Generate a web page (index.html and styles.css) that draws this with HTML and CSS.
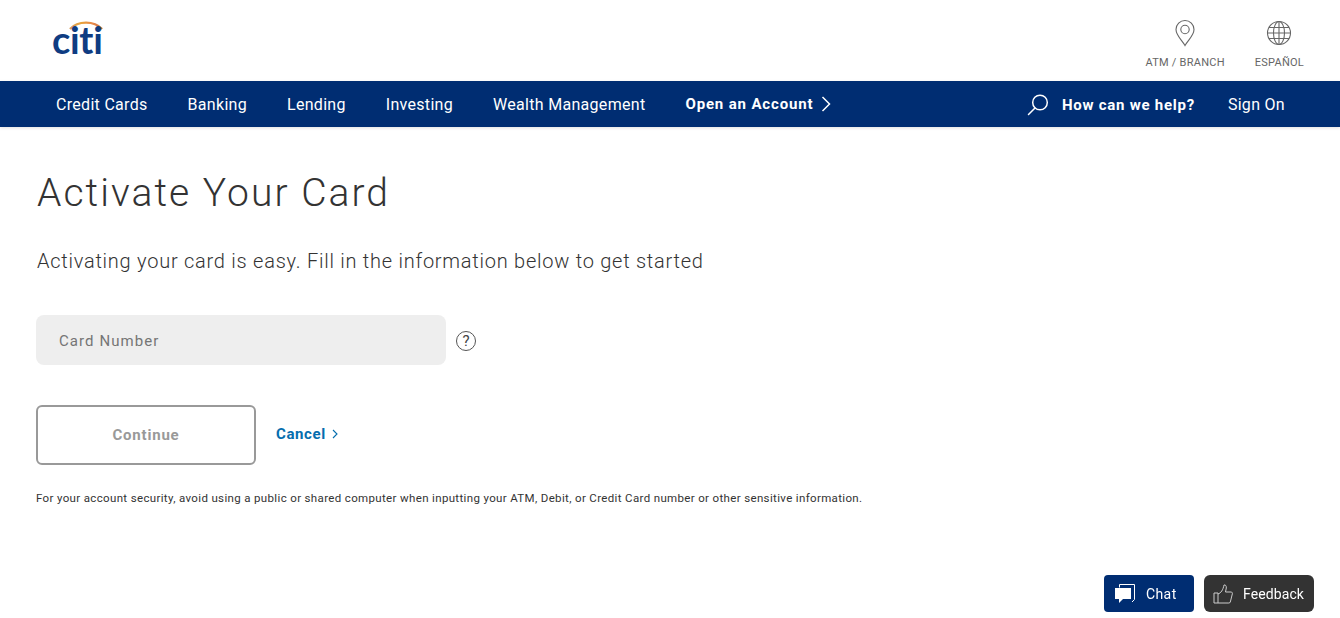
FILE: index.html
```html
<!DOCTYPE html>
<html lang="en">
<head>
<meta charset="utf-8">
<title>Activate Your Card</title>
<link rel="stylesheet" href="styles.css">
</head>
<body>
<header class="top">
  <a class="logo" href="#">
    <svg class="logo-arc" width="34" height="10" viewBox="0 0 34 10"><defs><linearGradient id="rb" x1="0" x2="1" y1="0" y2="0"><stop offset="0" stop-color="#d8a05a"/><stop offset=".35" stop-color="#e9a23b"/><stop offset=".7" stop-color="#e8894a"/><stop offset="1" stop-color="#c9703f"/></linearGradient></defs><path d="M1 9C9 .5 25 .5 33 9" fill="none" stroke="url(#rb)" stroke-width="2.400"/></svg>
    <span class="logo-text">citi</span>
  </a>
  <div class="utils">
    <a class="util" href="#">
      <svg width="24" height="28" viewBox="0 0 24 28" fill="none" stroke="#666" stroke-width="1.100"><path d="M12 26.500C9 21 3 16.500 3 10.500a9 9 0 0 1 18 0C21 16.500 15 21 12 26.500Z"/><circle cx="12" cy="10.500" r="4.200"/></svg>
      <span>ATM / BRANCH</span>
    </a>
    <a class="util" href="#">
      <svg width="28" height="28" viewBox="0 0 28 28" fill="none" stroke="#666" stroke-width="1.100"><circle cx="14" cy="14" r="11.500"/><ellipse cx="14" cy="14" rx="5.500" ry="11.500"/><path d="M14 2.500v23M2.500 14h23M4 8.500h20M4 19.500h20"/></svg>
      <span>ESPAÑOL</span>
    </a>
  </div>
</header>
<nav class="nav">
  <a href="#">Credit Cards</a>
  <a href="#">Banking</a>
  <a href="#">Lending</a>
  <a href="#">Investing</a>
  <a href="#">Wealth Management</a>
  <a class="strong open" href="#">Open an Account
    <svg width="10" height="16" viewBox="0 0 10 16" fill="none" stroke="#fff" stroke-width="1.500"><path d="M1.500 1l7 7-7 7"/></svg>
  </a>
  <div class="nav-right">
    <a class="strong help" href="#">
      <svg width="22" height="22" viewBox="0 0 22 22" fill="none" stroke="#fff" stroke-width="1.500"><circle cx="13" cy="8.500" r="7.300"/><path d="M8 14l-6.500 6.500" stroke-linecap="round"/></svg>
      How can we help?
    </a>
    <a href="#">Sign On</a>
  </div>
</nav>
<main class="main">
  <h1>Activate Your Card</h1>
  <p class="lead">Activating your card is easy. Fill in the information below to get started</p>
  <div class="field-row">
    <input class="field" type="text" placeholder="Card Number">
    <span class="hint">?</span>
  </div>
  <div class="actions">
    <button class="continue" type="button">Continue</button>
    <a class="cancel" href="#">Cancel <svg class="cancel-icon" width="6" height="10" viewBox="0 0 6 10" fill="none" stroke="#056dae" stroke-width="1.100"><path d="M1 1l4 4-4 4"/></svg></a>
  </div>
  <p class="note">For your account security, avoid using a public or shared computer when inputting your ATM, Debit, or Credit Card number or other sensitive information.</p>
</main>
<div class="float">
  <a class="chat" href="#">
    <svg width="22" height="22" viewBox="0 0 22 22"><path d="M5.500 4.500V1.500H20.500V16.500L18 19" fill="none" stroke="#fff" stroke-width="1"/><path d="M1 5H17V16H9L5 20V16H1Z" fill="#fff"/></svg>
    Chat
  </a>
  <a class="feedback" href="#">
    <svg width="20" height="22" viewBox="0 0 20 22" fill="none" stroke="#ccc" stroke-width="1"><path d="M1 10h4v10H1zM5 11c3-1 5-4 6-9 1.500-.5 2.500 1 2.300 3L12.500 9H18c1.200 0 1.600 1 1.300 2l-2 8c-.2.700-.7 1-1.500 1H5"/></svg>
    Feedback
  </a>
</div>
</body>
</html>
```

FILE: styles.css
```css
* { box-sizing: border-box; }
html, body { margin: 0; padding: 0; }
body { font-family: "Open Sans", "Liberation Sans", sans-serif; background: #fff; color: #333; overflow: hidden; height: 618px; }
a { text-decoration: none; color: inherit; }

.top { height: 81px; display: flex; justify-content: space-between; padding: 0 36px 0 52px; }
.logo { display: flex; flex-direction: column; width: 50px; padding-top: 20px; }
.logo-arc { display: block; margin-left: 17px; margin-bottom: -6px; }
.logo-text { font-family: "Lato", sans-serif; font-weight: 700; font-size: 38px; line-height: 30px; color: #0f3c82; letter-spacing: -.3px; }

.utils { display: flex; gap: 30px; padding-top: 19px; }
.util { display: flex; flex-direction: column; align-items: center; gap: 9px; font-family: "Roboto", sans-serif; font-size: 11px; line-height: 14px; letter-spacing: .25px; color: #666; }

.nav { height: 46px; background: #002d72; color: #fff; display: flex; align-items: center; gap: 40px; padding: 0 55px 0 56px; font-family: "Roboto", sans-serif; font-size: 16px; letter-spacing: .3px; box-shadow: 0 1px 3px rgba(0,0,0,.12); }
.nav > a, .nav-right > a { padding-top: 1px; }
.strong { font-weight: 700; font-size: 15px; letter-spacing: .85px; }
.open { display: flex; align-items: center; gap: 8px; margin-bottom: 2px; }
.nav-right { margin-left: auto; display: flex; align-items: center; gap: 33px; }
.help { display: flex; align-items: center; gap: 13px; letter-spacing: .75px; }

.main { padding: 0 36px; }
h1 { margin: 43px 0 0 1px; font-family: "Roboto", sans-serif; font-size: 39px; line-height: 46px; font-weight: 300; letter-spacing: 2.05px; color: #333; }
.lead { margin: 31px 0 0 1px; font-family: "Roboto", sans-serif; font-size: 20px; line-height: 28px; font-weight: 300; letter-spacing: .75px; color: #333; }
.field-row { margin-top: 40px; display: flex; align-items: center; gap: 10px; }
.field { width: 410px; height: 50px; border: 0; border-radius: 8px; background: #eee; padding: 1px 23px 0; font-family: "Roboto", sans-serif; font-size: 15px; letter-spacing: 1.07px; }
.field::placeholder { color: #757575; opacity: 1; }
.hint { width: 20px; height: 20px; margin-top: 2px; border: 1px solid #555; border-radius: 50%; display: flex; align-items: center; justify-content: center; font-family: "Roboto", sans-serif; font-size: 15px; color: #444; }
.actions { margin-top: 40px; display: flex; align-items: center; gap: 20px; }
.continue { width: 220px; height: 60px; background: #fff; border: 2px solid #999; border-radius: 6px; font-family: "Roboto", sans-serif; font-weight: 700; font-size: 15px; letter-spacing: .8px; color: #999; }
.cancel { font-family: "Roboto", sans-serif; font-weight: 700; font-size: 15px; letter-spacing: .6px; color: #056dae; margin-bottom: 2px; }
.cancel-icon { margin-left: 2px; }
.note { margin: 26px 0 0; font-family: "Roboto", sans-serif; font-size: 11.500px; line-height: 14px; letter-spacing: .35px; color: #333; }

.float { position: fixed; right: 26px; top: 575px; display: flex; gap: 10px; font-family: "Roboto", sans-serif; font-size: 14px; color: #fff; }
.chat, .feedback { height: 37px; border-radius: 4px; display: flex; align-items: center; gap: 10px; }
.chat { width: 90px; background: #002d72; padding-left: 10px; letter-spacing: .4px; }
.feedback { width: 110px; background: #333; padding-left: 9px; border-radius: 6px; letter-spacing: .1px; }
```
